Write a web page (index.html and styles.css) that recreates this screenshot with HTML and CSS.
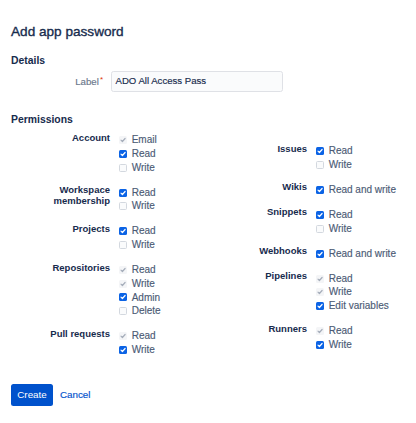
FILE: index.html
```html
<!DOCTYPE html>
<html>
<head>
<meta charset="utf-8">
<link rel="stylesheet" href="styles.css">
</head>
<body>
<div class="page">
  <h1 class="title">Add app password</h1>
  <h2 class="section details-h">Details</h2>
  <div class="field">
    <label class="field-label">Label<span class="req">*</span></label>
    <div class="input">ADO All Access Pass</div>
  </div>
  <h2 class="section perm-h">Permissions</h2>
  <div class="perms">
    <div class="col">
      <div class="group">
        <div class="glabel">Account</div>
        <div class="opts">
          <div class="opt"><span class="cb dis"><svg viewBox="0 0 8 8"><path d="M2 4.1 L3.4 5.5 L6.1 2.5"/></svg></span>Email</div>
          <div class="opt"><span class="cb on"><svg viewBox="0 0 8 8"><path d="M2 4.1 L3.4 5.5 L6.1 2.5"/></svg></span>Read</div>
          <div class="opt"><span class="cb off"></span>Write</div>
        </div>
      </div>
      <div class="group">
        <div class="glabel">Workspace membership</div>
        <div class="opts">
          <div class="opt"><span class="cb on"><svg viewBox="0 0 8 8"><path d="M2 4.1 L3.4 5.5 L6.1 2.5"/></svg></span>Read</div>
          <div class="opt"><span class="cb off"></span>Write</div>
        </div>
      </div>
      <div class="group">
        <div class="glabel">Projects</div>
        <div class="opts">
          <div class="opt"><span class="cb on"><svg viewBox="0 0 8 8"><path d="M2 4.1 L3.4 5.5 L6.1 2.5"/></svg></span>Read</div>
          <div class="opt"><span class="cb off"></span>Write</div>
        </div>
      </div>
      <div class="group">
        <div class="glabel">Repositories</div>
        <div class="opts">
          <div class="opt"><span class="cb dis"><svg viewBox="0 0 8 8"><path d="M2 4.1 L3.4 5.5 L6.1 2.5"/></svg></span>Read</div>
          <div class="opt"><span class="cb dis"><svg viewBox="0 0 8 8"><path d="M2 4.1 L3.4 5.5 L6.1 2.5"/></svg></span>Write</div>
          <div class="opt"><span class="cb on"><svg viewBox="0 0 8 8"><path d="M2 4.1 L3.4 5.5 L6.1 2.5"/></svg></span>Admin</div>
          <div class="opt"><span class="cb off"></span>Delete</div>
        </div>
      </div>
      <div class="group">
        <div class="glabel">Pull requests</div>
        <div class="opts">
          <div class="opt"><span class="cb dis"><svg viewBox="0 0 8 8"><path d="M2 4.1 L3.4 5.5 L6.1 2.5"/></svg></span>Read</div>
          <div class="opt"><span class="cb on"><svg viewBox="0 0 8 8"><path d="M2 4.1 L3.4 5.5 L6.1 2.5"/></svg></span>Write</div>
        </div>
      </div>
    </div>
    <div class="col right">
      <div class="group">
        <div class="glabel">Issues</div>
        <div class="opts">
          <div class="opt"><span class="cb on"><svg viewBox="0 0 8 8"><path d="M2 4.1 L3.4 5.5 L6.1 2.5"/></svg></span>Read</div>
          <div class="opt"><span class="cb off"></span>Write</div>
        </div>
      </div>
      <div class="group">
        <div class="glabel">Wikis</div>
        <div class="opts">
          <div class="opt"><span class="cb on"><svg viewBox="0 0 8 8"><path d="M2 4.1 L3.4 5.5 L6.1 2.5"/></svg></span>Read and write</div>
        </div>
      </div>
      <div class="group">
        <div class="glabel">Snippets</div>
        <div class="opts">
          <div class="opt"><span class="cb on"><svg viewBox="0 0 8 8"><path d="M2 4.1 L3.4 5.5 L6.1 2.5"/></svg></span>Read</div>
          <div class="opt"><span class="cb off"></span>Write</div>
        </div>
      </div>
      <div class="group">
        <div class="glabel">Webhooks</div>
        <div class="opts">
          <div class="opt"><span class="cb on"><svg viewBox="0 0 8 8"><path d="M2 4.1 L3.4 5.5 L6.1 2.5"/></svg></span>Read and write</div>
        </div>
      </div>
      <div class="group">
        <div class="glabel">Pipelines</div>
        <div class="opts">
          <div class="opt"><span class="cb dis"><svg viewBox="0 0 8 8"><path d="M2 4.1 L3.4 5.5 L6.1 2.5"/></svg></span>Read</div>
          <div class="opt"><span class="cb dis"><svg viewBox="0 0 8 8"><path d="M2 4.1 L3.4 5.5 L6.1 2.5"/></svg></span>Write</div>
          <div class="opt"><span class="cb on"><svg viewBox="0 0 8 8"><path d="M2 4.1 L3.4 5.5 L6.1 2.5"/></svg></span>Edit variables</div>
        </div>
      </div>
      <div class="group">
        <div class="glabel">Runners</div>
        <div class="opts">
          <div class="opt"><span class="cb dis"><svg viewBox="0 0 8 8"><path d="M2 4.1 L3.4 5.5 L6.1 2.5"/></svg></span>Read</div>
          <div class="opt"><span class="cb on"><svg viewBox="0 0 8 8"><path d="M2 4.1 L3.4 5.5 L6.1 2.5"/></svg></span>Write</div>
        </div>
      </div>
    </div>
  </div>
  <div class="actions">
    <button class="btn-primary">Create</button>
    <a class="btn-link">Cancel</a>
  </div>
</div>
</body>
</html>
```
FILE: styles.css
```css
html, body {
  margin: 0;
  padding: 0;
  background: #ffffff;
}
body {
  font-family: "Liberation Sans", Arial, sans-serif;
  color: #172B4D;
}
.page {
  padding: 23.6px 11px 0 11px;
}
.title {
  margin: 0;
  font-size: 13.6px;
  line-height: 16px;
  font-weight: 400;
  color: #172B4D;
  -webkit-text-stroke: 0.35px #172B4D;
}
.section {
  margin: 0;
  font-size: 10.4px;
  line-height: 13px;
  font-weight: 700;
  color: #172B4D;
}
.details-h {
  margin-top: 14.3px;
}
.perm-h {
  margin-top: 21.5px;
}
.field {
  display: flex;
  align-items: center;
  margin-top: 3.8px;
}
.field-label {
  width: 92px;
  text-align: right;
  font-size: 9.7px;
  color: #6B778C;
  padding-right: 8px;
  -webkit-text-stroke: 0.15px #6B778C;
}
.req {
  color: #DE350B;
  font-size: 8px;
  vertical-align: 3px;
  margin-left: 1px;
  -webkit-text-stroke: 0;
}
.input {
  box-sizing: border-box;
  width: 172px;
  height: 21px;
  background: #FAFBFC;
  border: 1.3px solid #DFE1E6;
  border-radius: 2.5px;
  font-size: 9.6px;
  line-height: 18px;
  padding-left: 3.5px;
  color: #172B4D;
  -webkit-text-stroke: 0.15px #172B4D;
}
.perms {
  display: grid;
  grid-template-columns: 197px 197px;
  margin-top: 7.1px;
}
.right {
  padding-top: 11px;
}
.group {
  display: flex;
  margin-bottom: 11.3px;
}
.glabel {
  width: 99px;
  flex: none;
  text-align: right;
  font-size: 9.5px;
  line-height: 10.7px;
  font-weight: 700;
  color: #172B4D;
  margin-top: -0.5px;
}
.opts {
  margin-left: 8.7px;
}
.opt {
  display: flex;
  align-items: center;
  font-size: 10px;
  line-height: 13.7px;
  color: #4C5B75;
  white-space: nowrap;
  -webkit-text-stroke: 0.15px #4C5B75;
}
.cb {
  box-sizing: border-box;
  width: 8px;
  height: 8px;
  border-radius: 1.5px;
  margin-right: 5px;
  display: inline-flex;
  flex: none;
}
.cb svg {
  width: 8px;
  height: 8px;
}
.cb path {
  fill: none;
  stroke-width: 1.2;
  stroke-linecap: round;
  stroke-linejoin: round;
}
.cb.on {
  background: #0B63E5;
}
.cb.on path {
  stroke: #ffffff;
}
.cb.dis {
  background: #F4F5F7;
}
.cb.dis path {
  stroke: #A5ADBA;
}
.cb.off {
  background: #FAFBFC;
  border: 1px solid #D3D8DF;
}
.actions {
  display: flex;
  align-items: center;
  margin-top: 16px;
}
.btn-primary {
  box-sizing: border-box;
  height: 22px;
  width: 42px;
  padding: 0;
  border: none;
  border-radius: 2.5px;
  background: #0052CC;
  color: #ffffff;
  font-family: "Liberation Sans", Arial, sans-serif;
  font-size: 9.8px;
}
.btn-link {
  margin-left: 7px;
  color: #0052CC;
  font-size: 9.8px;
  -webkit-text-stroke: 0.15px #0052CC;
}
```
